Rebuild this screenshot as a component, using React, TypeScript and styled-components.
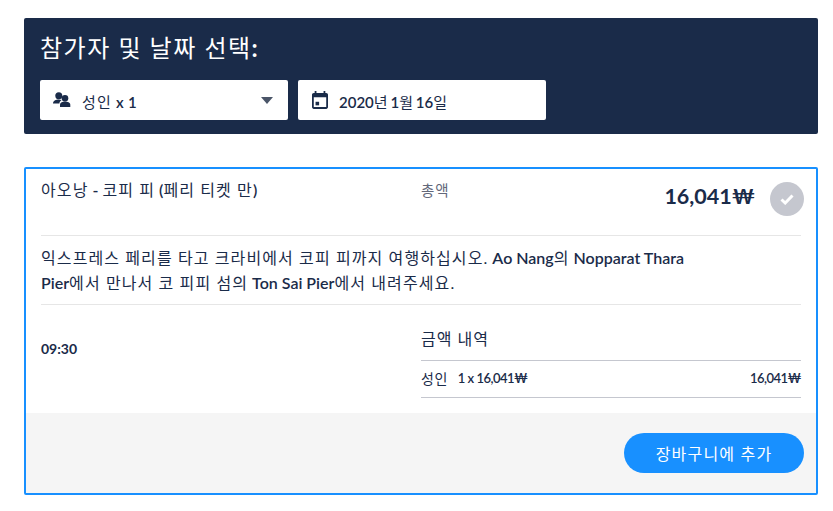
import React from 'react';
import styled, { createGlobalStyle } from 'styled-components';

// ----------------------------------------------------------------------

const GlobalStyle = createGlobalStyle`
  html, body {
    margin: 0;
    padding: 0;
    background: #fff;
  }
  body {
    font-family: 'Lato', 'Noto Sans CJK KR', sans-serif;
    color: #1a2b49;
  }
`;

const navy = '#1a2b49';
const blue = '#1890ff';

// ----------------------------------------------------------------------

const UsersIcon = () => (
  <svg width="18" height="16" viewBox="0 0 18 16" fill={navy}>
    <circle cx="5.800" cy="3.800" r="3.500" />
    <path d="M0 11.500c0-2.800 2.800-4.100 5.800-4.100 1 0 2 .2 2.800.5-1.200.8-2.200 2-2.200 3.600z" />
    <circle cx="12" cy="6.300" r="3.300" />
    <path d="M7 15v-2.300c0-2.200 2.600-3.300 5-3.300s5.300 1.100 5.300 3.300V15z" />
  </svg>
);

const CalendarIcon = () => (
  <svg width="16" height="18" viewBox="3 1 18 20" fill={navy}>
    <path d="M16 1v2H8V1H6v2H5C3.900 3 3 3.900 3 5v14c0 1.100.9 2 2 2h14c1.100 0 2-.9 2-2V5c0-1.100-.9-2-2-2h-1V1zm3 18H5V8h14z" />
    <rect x="7" y="13" width="4" height="4" />
  </svg>
);

const CheckIcon = () => (
  <svg width="14" height="11" viewBox="0 0 14 11" fill="none" stroke="#fff" strokeWidth="3">
    <path d="M1.500 5.500l3.700 3.500 7.300-7.500" />
  </svg>
);

// ----------------------------------------------------------------------

const App: React.FC = () => (
  <>
    <GlobalStyle />
    <Page>
      <Header>
        <Title>
          참가자 및 날짜 선택<b>:</b>
        </Title>
        <Controls>
          <Select>
            <IconSlot>
              <UsersIcon />
            </IconSlot>
            <ControlText $wordGap={0.5}>
              <Thin>성인</Thin> x 1
            </ControlText>
            <Caret />
          </Select>
          <DateField>
            <CalendarIcon />
            <ControlText $wordGap={-2}>
              2020<Thin>년</Thin> 1<Thin>월</Thin> 16<Thin>일</Thin>
            </ControlText>
          </DateField>
        </Controls>
      </Header>

      <Card>
        <CardBody>
          <TopRow>
            <OptionName>
              <Thin>아오낭</Thin> - <Thin>코피 피</Thin> (<Thin>페리 티켓 만</Thin>)
            </OptionName>
            <TotalLabel>총액</TotalLabel>
            <TotalPrice>16,041₩</TotalPrice>
            <CheckCircle>
              <CheckIcon />
            </CheckCircle>
          </TopRow>
          <Description>
            <Thin>익스프레스 페리를 타고 크라비에서 코피 피까지 여행하십시오.</Thin> Ao Nang<Thin>의</Thin> Nopparat Thara
            <br />
            Pier<Thin>에서 만나서 코 피피 섬의</Thin> Ton Sai Pier<Thin>에서 내려주세요.</Thin>
          </Description>
          <DetailRow>
            <Time>09:30</Time>
            <Breakdown>
              <BreakdownTitle>금액 내역</BreakdownTitle>
              <BreakdownLine>
                <LineLabel>
                  <LineKo>성인</LineKo>
                  <span>1 x 16,041₩</span>
                </LineLabel>
                <span>16,041₩</span>
              </BreakdownLine>
            </Breakdown>
          </DetailRow>
        </CardBody>
        <Footer>
          <AddButton>장바구니에 추가</AddButton>
        </Footer>
      </Card>
    </Page>
  </>
);

// ----------------------------------------------------------------------

const Page = styled.div`
  width: 833px;
  height: 511px;
  box-sizing: border-box;
  padding: 18px 15px 0 24px;
  overflow: hidden;
`;

const Header = styled.div`
  height: 116px;
  box-sizing: border-box;
  padding: 14px 16px 0;
  background: ${navy};
  border-radius: 2px;
`;

const Title = styled.h2`
  margin: 0 0 16px;
  height: 32px;
  line-height: 32px;
  font-size: 24px;
  font-weight: 400;
  letter-spacing: 1.500px;
  color: #fff;
`;

const Controls = styled.div`
  display: flex;
  gap: 10px;
`;

const Select = styled.div`
  width: 248px;
  height: 40px;
  display: flex;
  align-items: center;
  box-sizing: border-box;
  padding: 0 15px 0 13px;
  background: #fff;
  border-radius: 2px;
`;

const IconSlot = styled.span`
  display: flex;
  margin-right: 11px;
`;

const ControlText = styled.span<{ $wordGap: number }>`
  flex: 1;
  padding-top: 2px;
  font-size: 15px;
  font-weight: 600;
  word-spacing: ${(props) => props.$wordGap}px;
  color: ${navy};
`;

const Thin = styled.span`
  font-weight: 400;
  letter-spacing: 1.100px;
`;

const Caret = styled.span`
  width: 0;
  height: 0;
  border-left: 6.500px solid transparent;
  border-right: 6.500px solid transparent;
  border-top: 7px solid #4a5568;
`;

const DateField = styled.div`
  width: 248px;
  height: 40px;
  display: flex;
  align-items: center;
  gap: 11px;
  box-sizing: border-box;
  padding: 0 14px;
  background: #fff;
  border-radius: 2px;
`;

const Card = styled.div`
  margin-top: 33px;
  height: 328px;
  box-sizing: border-box;
  display: flex;
  flex-direction: column;
  border: 2px solid ${blue};
  border-radius: 2px;
`;

const CardBody = styled.div`
  flex: 1;
  padding: 0 15px;
`;

const TopRow = styled.div`
  height: 67px;
  box-sizing: border-box;
  display: flex;
  align-items: flex-start;
  border-bottom: 1px solid #e6e6e6;
`;

const OptionName = styled.div`
  width: 380px;
  margin-top: 10px;
  font-size: 16px;
  line-height: 22px;
  font-weight: 600;
  color: ${navy};
`;

const TotalLabel = styled.div`
  flex: 1;
  margin-top: 12px;
  font-size: 14.500px;
  line-height: 20px;
  letter-spacing: 0.900px;
  color: #63687a;
`;

const TotalPrice = styled.div`
  margin-top: 13px;
  font-size: 21.500px;
  line-height: 28px;
  font-weight: 700;
  color: ${navy};
`;

const CheckCircle = styled.div`
  width: 34px;
  height: 34px;
  margin: 13px -3px 0 15px;
  display: flex;
  align-items: center;
  justify-content: center;
  border-radius: 50%;
  background: #c5c7cf;
`;

const Description = styled.div`
  height: 69px;
  box-sizing: border-box;
  padding-top: 9px;
  font-size: 16px;
  line-height: 25px;
  font-weight: 600;
  color: ${navy};
  border-bottom: 1px solid #e6e6e6;
`;

const DetailRow = styled.div`
  display: flex;
`;

const Time = styled.div`
  width: 380px;
  margin-top: 34px;
  font-size: 14px;
  line-height: 20px;
  font-weight: 700;
  color: ${navy};
`;

const Breakdown = styled.div`
  flex: 1;
  padding-top: 22px;
`;

const BreakdownTitle = styled.div`
  height: 33px;
  font-size: 16px;
  line-height: 24px;
  letter-spacing: 1px;
  color: ${navy};
  border-bottom: 1px solid #c5c7cf;
`;

const BreakdownLine = styled.div`
  height: 37px;
  box-sizing: border-box;
  display: flex;
  align-items: center;
  justify-content: space-between;
  padding-bottom: 3px;
  font-size: 13px;
  font-weight: 600;
  letter-spacing: -0.500px;
  color: ${navy};
  border-bottom: 1px solid #c5c7cf;
`;

const LineLabel = styled.div`
  display: flex;
  align-items: center;
  gap: 10px;
`;

const LineKo = styled.span`
  font-size: 14px;
  font-weight: 400;
  letter-spacing: 0.500px;
`;

const Footer = styled.div`
  height: 80px;
  box-sizing: border-box;
  display: flex;
  justify-content: flex-end;
  padding: 20px 12px 0 0;
  background: #f5f5f5;
`;

const AddButton = styled.button`
  width: 180px;
  height: 40px;
  padding: 0;
  border: 0;
  border-radius: 20px;
  background: ${blue};
  color: #fff;
  font-family: inherit;
  font-size: 16px;
  letter-spacing: 1.200px;
`;

// ----------------------------------------------------------------------

export default App;
